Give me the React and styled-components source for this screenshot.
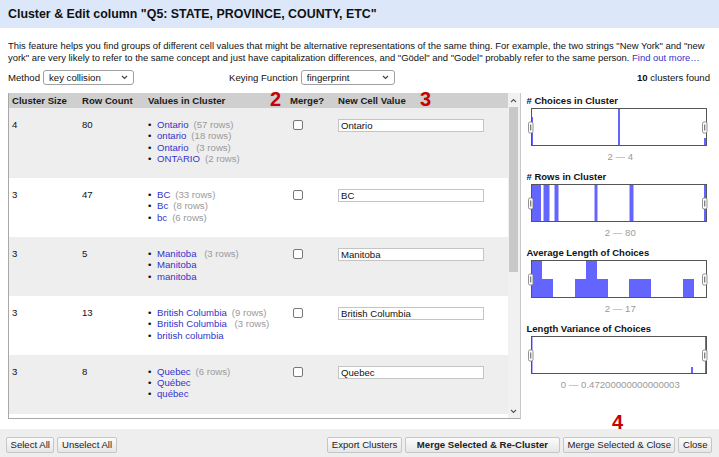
import React from "react";
import styled, { createGlobalStyle } from "styled-components";

const GlobalStyle = createGlobalStyle`
  html, body {
    margin: 0;
    padding: 0;
    background: #ffffff;
  }
  body {
    font-family: "Liberation Sans", Arial, sans-serif;
    font-size: 9.6px;
    color: #111;
  }
`;

const Page = styled.div`
  position: relative;
  width: 719px;
  height: 457px;
  overflow: hidden;
  display: flex;
  flex-direction: column;
  background: #fff;
`;

const TitleBar = styled.div`
  height: 28px;
  flex: none;
  display: flex;
  align-items: center;
  padding-left: 8px;
  background: #dce7fa;
  font-size: 12.4px;
  font-weight: bold;
  color: #111;
`;

const Body = styled.div`
  flex: 1;
  display: flex;
  flex-direction: column;
  padding: 0 9px 0 8px;
`;

const Description = styled.p`
  margin: 12px 0 0;
  font-size: 9.45px;
  line-height: 12px;
  color: #111;
  white-space: nowrap;
`;

const Link = styled.a`
  color: #3333cc;
  text-decoration: none;
`;

const Controls = styled.div`
  display: flex;
  align-items: center;
  margin-top: 6px;
  height: 15px;
`;

const Label = styled.span`
  margin-left: ${(p) => p.$offset || 0}px;
  margin-right: 3px;
`;

const FakeSelect = styled.div`
  width: ${(p) => p.$width}px;
  height: 15px;
  box-sizing: border-box;
  border: 1px solid #a0a0a0;
  border-radius: 3px;
  display: flex;
  align-items: center;
  justify-content: space-between;
  padding: 0 5px 0 5px;
  background: #fff;
`;

const Found = styled.span`
  margin-left: auto;
  > b { font-weight: bold; }
`;

const Main = styled.div`
  display: flex;
  margin-top: 8px;
  gap: 6px;
`;

const TableBox = styled.div`
  width: 514px;
  height: 326px;
  box-sizing: border-box;
  border-left: 1px solid #a8a8a8;
  border-bottom: 1px solid #a8a8a8;
  border-right: 1px solid #c8c8c8;
  display: flex;
  overflow: hidden;
`;

const TableArea = styled.div`
  flex: 1;
  overflow: hidden;
`;

const gridCols = "69px 66px 141px 49px 1fr";

const HeaderRow = styled.div`
  display: grid;
  grid-template-columns: ${gridCols};
  height: 15px;
  align-items: center;
  background: #cfcfcf;
  font-weight: bold;
  color: #1a1a1a;
`;

const HeadCell = styled.div`
  padding-left: ${(p) => p.$pad}px;
`;

const Row = styled.div`
  display: grid;
  grid-template-columns: ${gridCols};
  align-items: start;
  padding: 11px 0 14px;
  background: ${(p) => (p.$shade ? "#eeeeee" : "#ffffff")};
  line-height: 11.3px;
`;

const Cell = styled.div`
  padding-left: ${(p) => p.$pad}px;
`;

const ValueList = styled.ul`
  margin: 0;
  padding: 0 0 0 4px;
  list-style: none;
`;

const ValueItem = styled.li`
  display: flex;
  white-space: pre;
  &::before {
    content: "•";
    width: 9px;
    color: #111;
  }
`;

const ValueName = styled.span`
  color: #3333cc;
`;

const RowsCount = styled.span`
  color: #9a9a9a;
  margin-left: 5px;
`;

const CheckBox = styled.span`
  display: block;
  width: 10px;
  height: 10px;
  margin: 1px 0 0 8px;
  box-sizing: border-box;
  border: 1px solid #777;
  border-radius: 2px;
  background: #fff;
`;

const ValueInput = styled.input`
  width: 146px;
  height: 13px;
  box-sizing: border-box;
  margin: 0 0 0 4px;
  padding: 0 2px;
  border: 1px solid #c4c4c4;
  font-family: inherit;
  font-size: 9.6px;
  color: #111;
  background: #fff;
  outline: none;
`;

const ScrollBar = styled.div`
  width: 12px;
  flex: none;
  background: #f1f1f1;
  display: flex;
  flex-direction: column;
  align-items: center;
`;

const ScrollArrow = styled.div`
  height: 14px;
  display: flex;
  align-items: center;
  justify-content: center;
  color: #666;
`;

const ScrollThumb = styled.div`
  width: 9px;
  height: 165px;
  background: #c8c8c8;
`;

const ScrollSpacer = styled.div`
  flex: 1;
`;

const Panel = styled.div`
  width: 184px;
  padding-top: 2px;
  display: flex;
  flex-direction: column;
`;

const FacetTitle = styled.div`
  font-size: 9.5px;
  font-weight: bold;
  line-height: 12px;
  color: #111;
`;

const HistoBox = styled.div`
  margin: 1px 0 0 4px;
  width: 176px;
  height: 38px;
`;

const Range = styled.div`
  margin-top: 5px;
  margin-bottom: 8px;
  line-height: 12px;
  text-align: center;
  color: #9a9a9a;
  padding-left: 4px;
`;

const ButtonBar = styled.div`
  height: 28px;
  flex: none;
  box-sizing: border-box;
  padding: 8px 7px 4px 6px;
  background: #eeeeee;
  display: flex;
  align-items: flex-start;
  gap: 3px;
`;

const Spacer = styled.div`
  flex: 1;
`;

const Button = styled.button`
  height: 16px;
  padding: 0 ${(p) => (p.$wide ? 11 : 3.5)}px;
  border: 1px solid #c6c6c6;
  border-radius: 2px;
  background: linear-gradient(#fbfbfb, #e6e6e6);
  font-family: inherit;
  font-size: 9.6px;
  font-weight: ${(p) => (p.$bold ? "bold" : "normal")};
  color: #222;
  line-height: 14px;
`;

const Marker = styled.span`
  position: absolute;
  left: ${(p) => p.$x}px;
  top: ${(p) => p.$y}px;
  font-size: 20px;
  font-weight: bold;
  line-height: 20px;
  color: #c80000;
`;

function Chevron() {
  return (
    <svg width="7" height="5" viewBox="0 0 7 5">
      <path d="M1 1 L3.5 3.5 L6 1" fill="none" stroke="#444" strokeWidth="1.2" />
    </svg>
  );
}

function Histogram({ bars, fringe = [] }) {
  const handle = (x) => (
    <g>
      <rect x={x} y={14} width={4.5} height={11} rx={1.5} fill="#fff" stroke="#777" strokeWidth="0.8" />
      <line x1={x + 2.25} y1={16.5} x2={x + 2.25} y2={22.5} stroke="#555" strokeWidth="1" />
    </g>
  );
  return (
    <svg width="176" height="38" viewBox="0 0 176 38" style={{ overflow: "visible" }}>
      <rect x="0" y="0" width="176" height="38" fill="#fff" />
      {fringe.map((b, i) => (
        <rect key={"f" + i} x={b[0]} y={b[2] || 0} width={b[1]} height={38 - (b[2] || 0)} fill="#b3b3ff" />
      ))}
      {bars.map((b, i) => (
        <rect key={i} x={b[0]} y={b[2] || 0} width={b[1]} height={38 - (b[2] || 0)} fill="#6464ff" />
      ))}
      <rect x="0.5" y="0.5" width="175" height="37" fill="none" stroke="#555" strokeWidth="1" />
      {handle(-2.5)}
      {handle(171.5)}
    </svg>
  );
}

const clusters = [
  {
    size: 4,
    count: 80,
    values: [
      ["Ontario", "57 rows"],
      ["ontario", "18 rows"],
      ["Ontario ", "3 rows"],
      ["ONTARIO", "2 rows"],
    ],
    value: "Ontario",
  },
  {
    size: 3,
    count: 47,
    values: [
      ["BC", "33 rows"],
      ["Bc", "8 rows"],
      ["bc", "6 rows"],
    ],
    value: "BC",
  },
  {
    size: 3,
    count: 5,
    values: [["Manitoba ", "3 rows"], ["Manitoba"], ["manitoba"]],
    value: "Manitoba",
  },
  {
    size: 3,
    count: 13,
    values: [["British Columbia", "9 rows"], ["British Columbia ", "3 rows"], ["british columbia"]],
    value: "British Columbia",
  },
  {
    size: 3,
    count: 8,
    values: [["Quebec", "6 rows"], ["Québec"], ["québec"]],
    value: "Quebec",
  },
];

const facets = [
  {
    title: "# Choices in Cluster",
    range: "2 — 4",
    bars: [[0, 2, 9], [87, 2], [173, 2, 30]],
  },
  {
    title: "# Rows in Cluster",
    range: "2 — 80",
    bars: [[0, 10], [13, 5], [24, 3], [64, 2], [99, 3], [173, 2]],
    fringe: [[12, 7], [23, 5], [63, 4], [98, 5]],
  },
  {
    title: "Average Length of Choices",
    range: "2 — 17",
    bars: [[0, 11], [11, 11, 19], [44, 11, 19], [55, 11], [66, 11, 19], [98, 22, 19], [152, 11, 19]],
  },
  {
    title: "Length Variance of Choices",
    range: "0 — 0.47200000000000003",
    bars: [[0, 1.5], [160, 2, 31], [174, 1.5]],
  },
];

export default function App() {
  return (
    <Page>
      <GlobalStyle />
      <TitleBar>Cluster &amp; Edit column "Q5: STATE, PROVINCE, COUNTY, ETC"</TitleBar>
      <Body>
        <Description>
          This feature helps you find groups of different cell values that might be alternative representations of
          the same thing. For example, the two strings "New York" and "new
          <br />
          york" are very likely to refer to the same concept and just have capitalization differences, and "Gödel"
          and "Godel" probably refer to the same person. <Link href="#">Find out more…</Link>
        </Description>
        <Controls>
          <Label>Method</Label>
          <FakeSelect $width={91}>
            key collision <Chevron />
          </FakeSelect>
          <Label $offset={95}>Keying Function</Label>
          <FakeSelect $width={94}>
            fingerprint <Chevron />
          </FakeSelect>
          <Found>
            <b>10</b> clusters found
          </Found>
        </Controls>
        <Main>
          <TableBox>
            <TableArea>
              <HeaderRow>
                <HeadCell $pad={3}>Cluster Size</HeadCell>
                <HeadCell $pad={4}>Row Count</HeadCell>
                <HeadCell $pad={4}>Values in Cluster</HeadCell>
                <HeadCell $pad={5}>Merge?</HeadCell>
                <HeadCell $pad={4}>New Cell Value</HeadCell>
              </HeaderRow>
              {clusters.map((c, i) => (
                <Row key={i} $shade={i % 2 === 0}>
                  <Cell $pad={3}>{c.size}</Cell>
                  <Cell $pad={4}>{c.count}</Cell>
                  <Cell $pad={0}>
                    <ValueList>
                      {c.values.map((v, j) => (
                        <ValueItem key={j}>
                          <ValueName>{v[0]}</ValueName>
                          {v[1] && <RowsCount>({v[1]})</RowsCount>}
                        </ValueItem>
                      ))}
                    </ValueList>
                  </Cell>
                  <Cell $pad={0}>
                    <CheckBox />
                  </Cell>
                  <Cell $pad={0}>
                    <ValueInput readOnly value={c.value} />
                  </Cell>
                </Row>
              ))}
            </TableArea>
            <ScrollBar>
              <ScrollArrow>
                <svg width="7" height="5" viewBox="0 0 7 5">
                  <path d="M1 4 L3.5 1.5 L6 4" fill="none" stroke="#555" strokeWidth="1.1" />
                </svg>
              </ScrollArrow>
              <ScrollThumb />
              <ScrollSpacer />
              <ScrollArrow>
                <svg width="7" height="5" viewBox="0 0 7 5">
                  <path d="M1 1 L3.5 3.5 L6 1" fill="none" stroke="#555" strokeWidth="1.1" />
                </svg>
              </ScrollArrow>
            </ScrollBar>
          </TableBox>
          <Panel>
            {facets.map((f) => (
              <React.Fragment key={f.title}>
                <FacetTitle>{f.title}</FacetTitle>
                <HistoBox>
                  <Histogram bars={f.bars} fringe={f.fringe} />
                </HistoBox>
                <Range>{f.range}</Range>
              </React.Fragment>
            ))}
          </Panel>
        </Main>
        <Spacer />
      </Body>
      <ButtonBar>
        <Button>Select All</Button>
        <Button>Unselect All</Button>
        <Spacer />
        <Button>Export Clusters</Button>
        <Button $bold $wide>
          Merge Selected &amp; Re-Cluster
        </Button>
        <Button>Merge Selected &amp; Close</Button>
        <Button>Close</Button>
      </ButtonBar>
      <Marker $x={270} $y={89}>2</Marker>
      <Marker $x={420} $y={89}>3</Marker>
      <Marker $x={612} $y={412}>4</Marker>
    </Page>
  );
}
